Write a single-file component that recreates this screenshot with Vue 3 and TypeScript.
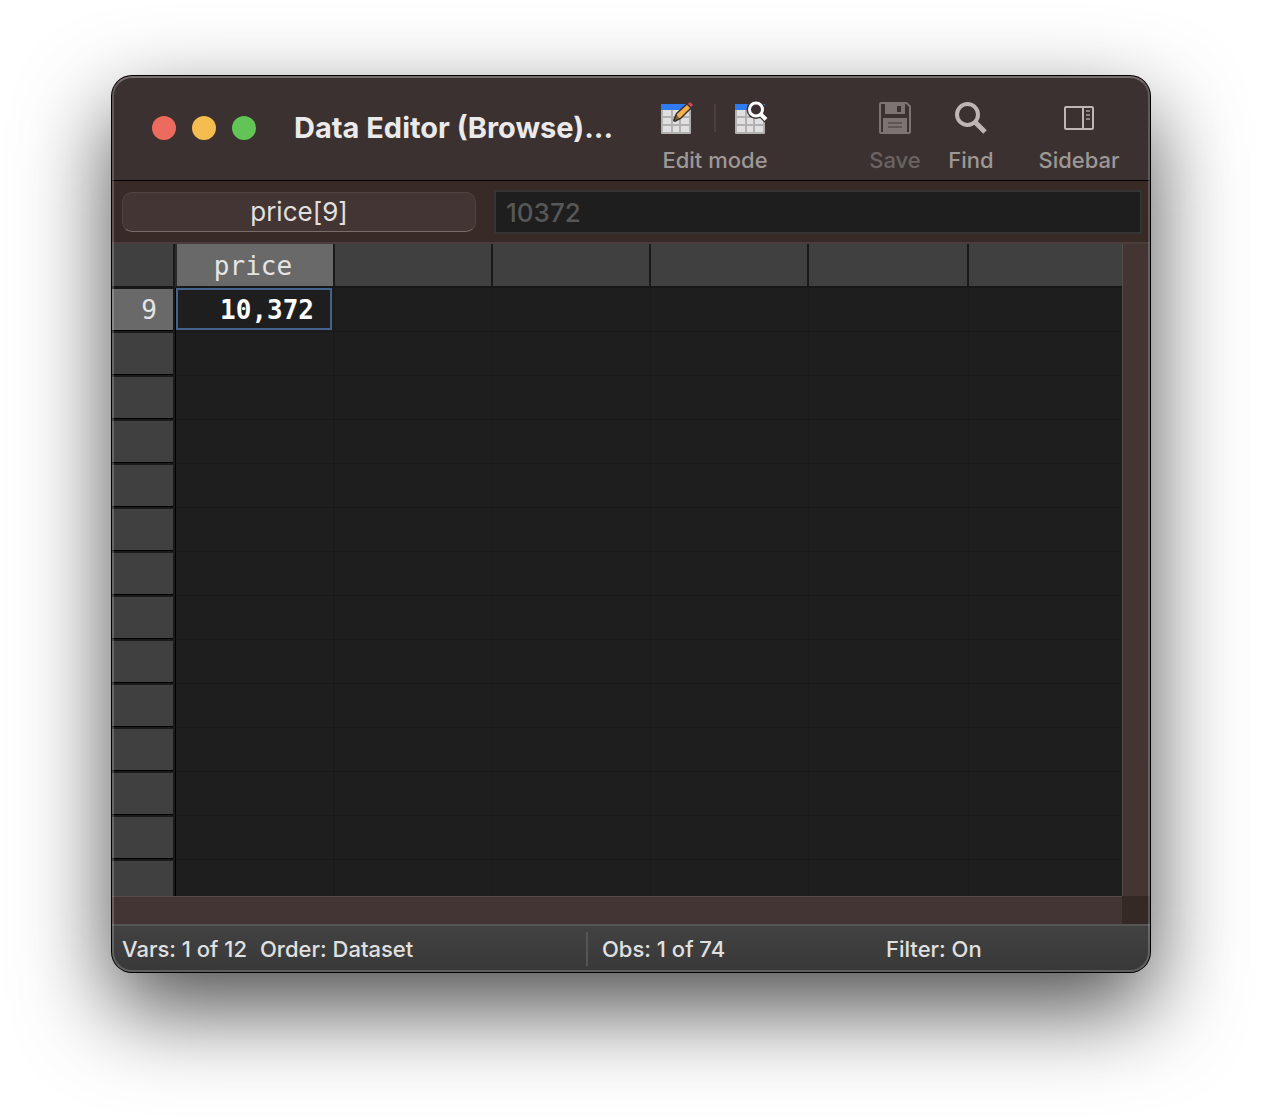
<script setup lang="ts">
import { ref } from 'vue'

interface Column {
  name: string
  width: string
}

interface Row {
  label: string
  value: string
}

const columns: Column[] = [
  { name: 'price', width: '160px' },
  { name: '', width: '158px' },
  { name: '', width: '158px' },
  { name: '', width: '158px' },
  { name: '', width: '160px' },
  { name: '', width: 'auto' },
]

const rows: Row[] = Array.from({ length: 14 }, (_, i) => ({
  label: i === 0 ? '9' : '',
  value: i === 0 ? '10,372' : '',
}))

const cellValue = ref('10372')
</script>

<template>
  <main class="desktop">
    <section class="window">
      <header class="titlebar">
        <div class="lights">
          <button class="light close" aria-label="Close"></button>
          <button class="light minimize" aria-label="Minimize"></button>
          <button class="light zoom" aria-label="Zoom"></button>
        </div>
        <h1 class="title">Data Editor (Browse)...</h1>

        <div class="tools">
          <div class="mode" role="group" aria-labelledby="mode-label">
            <div class="mode-buttons">
              <button class="icon-button" aria-label="Edit">
                <svg width="34" height="34" viewBox="0 0 34 34">
                  <rect x="0" y="2" width="30" height="30" rx="1" fill="#b3b1b0" />
                  <path d="M0 8 V3 Q0 2 1 2 H29 Q30 2 30 3 V8 Z" fill="#2f7cf0" />
                  <g fill="#e0e0e2">
                    <rect x="2" y="8" width="8" height="6" /><rect x="12" y="8" width="6" height="6" /><rect x="20" y="8" width="8" height="6" />
                    <rect x="2" y="16" width="8" height="6" /><rect x="12" y="16" width="6" height="6" /><rect x="20" y="16" width="8" height="6" />
                    <rect x="2" y="24" width="8" height="6" /><rect x="12" y="24" width="6" height="6" /><rect x="20" y="24" width="8" height="6" />
                  </g>
                  <path d="M12 18 L15 11 L26 1 Q29 -2 32 1 Q34 4 31 6 L20 17 L14 20 Q12 20 12 18 Z" fill="#3b3130" />
                  <path d="M14 18 L16 13 L19 16 Z" fill="#8a6534" />
                  <path d="M16 12 L26 3 L29 6 L19 16 Q16 15 16 12 Z" fill="#f3b14b" />
                  <path d="M27 2 L29 0 L32 3 L30 5 Z" fill="#e04556" />
                </svg>
              </button>
              <span class="mode-divider"></span>
              <button class="icon-button" aria-label="Browse">
                <svg width="34" height="34" viewBox="0 0 34 34">
                  <rect x="0" y="2" width="30" height="30" rx="1" fill="#b3b1b0" />
                  <path d="M0 8 V3 Q0 2 1 2 H29 Q30 2 30 3 V8 Z" fill="#2f7cf0" />
                  <g fill="#e0e0e2">
                    <rect x="2" y="8" width="8" height="6" /><rect x="12" y="8" width="6" height="6" /><rect x="20" y="8" width="8" height="6" />
                    <rect x="2" y="16" width="8" height="6" /><rect x="12" y="16" width="6" height="6" /><rect x="20" y="16" width="8" height="6" />
                    <rect x="2" y="24" width="8" height="6" /><rect x="12" y="24" width="6" height="6" /><rect x="20" y="24" width="8" height="6" />
                  </g>
                  <circle cx="21" cy="7.500" r="9.500" fill="#3b3130" />
                  <path d="M25 11 L32 18" stroke="#3b3130" stroke-width="7" />
                  <circle cx="21" cy="7.500" r="6.500" fill="#3b3130" stroke="#fff" stroke-width="3" />
                  <path d="M25 11.500 L31 17.500" stroke="#fff" stroke-width="4" />
                </svg>
              </button>
            </div>
            <span id="mode-label" class="caption">Edit mode</span>
          </div>

          <button class="tool save" disabled>
            <svg width="32" height="32" viewBox="0 0 32 32">
              <path fill-rule="evenodd" fill="#7c7472" d="M2 0 H28 L32 4 V30 Q32 32 30 32 H2 Q0 32 0 30 V2 Q0 0 2 0 Z M2 2 V30 H4 V16 H28 V30 H30 V5 L27 2 H26 V12 H6 V2 Z M18 4 V10 H22 V4 Z" />
              <path d="M9 21 H23 M9 25 H23" stroke="#5f5654" stroke-width="2" />
            </svg>
            <span class="caption">Save</span>
          </button>

          <button class="tool find">
            <svg width="32" height="32" viewBox="0 0 32 32" fill="none" stroke="#bfb5b3">
              <circle cx="12.500" cy="12.500" r="10.500" stroke-width="4" />
              <path d="M20 20 L30 30" stroke-width="5" />
            </svg>
            <span class="caption">Find</span>
          </button>

          <button class="tool sidebar">
            <svg width="30" height="32" viewBox="0 0 30 32" fill="none" stroke="#bfb5b3">
              <rect x="1" y="5" width="28" height="22" rx="1" stroke-width="2" />
              <path d="M19 5 V27" stroke-width="2" />
              <path d="M22 9 H26 M22 13 H26 M22 17 H26" stroke="#8c8381" stroke-width="2" />
            </svg>
            <span class="caption">Sidebar</span>
          </button>
        </div>
      </header>

      <div class="entry">
        <button class="reference">price[9]</button>
        <input v-model="cellValue" class="value" type="text" aria-label="Cell value" disabled />
      </div>

      <div class="grid-area">
        <table class="grid">
          <colgroup>
            <col class="row-col" />
            <col v-for="(column, i) in columns" :key="i" :style="{ width: column.width }" />
          </colgroup>
          <thead>
            <tr>
              <th class="corner"></th>
              <th v-for="(column, i) in columns" :key="i" scope="col" :class="{ active: column.name }">
                {{ column.name }}
              </th>
            </tr>
          </thead>
          <tbody>
            <tr v-for="(row, r) in rows" :key="r" :class="{ current: row.label }">
              <th scope="row"><div class="row-label">{{ row.label }}</div></th>
              <td v-for="(column, c) in columns" :key="c">
                <div v-if="c === 0 && row.value" class="selected">{{ row.value }}</div>
              </td>
            </tr>
          </tbody>
        </table>
        <div class="scroll-y"></div>
        <div class="scroll-x"></div>
        <div class="scroll-corner"></div>
      </div>

      <footer class="status">
        <div class="status-vars"><span>Vars: 1 of 12</span><span>Order: Dataset</span></div>
        <div class="status-obs">Obs: 1 of 74</div>
        <div class="status-filter">Filter: On</div>
      </footer>
    </section>
  </main>
</template>

<style>
body {
  margin: 0;
  background: #fff;
}
</style>

<style scoped>
* {
  box-sizing: border-box;
}

button {
  margin: 0;
  padding: 0;
  border: 0;
  background: none;
  font: inherit;
  color: inherit;
}

svg {
  display: block;
  flex: none;
  overflow: visible;
}

.desktop {
  min-height: 100vh;
  padding: 76px 112px 148px;
  overflow: hidden;
  font-family: Inter, "Liberation Sans", sans-serif;
}

.window {
  position: relative;
  overflow: hidden;
  border-radius: 20px;
  background: #372a27;
  box-shadow: 0 0 0 1px #000, 0 36px 90px rgba(0, 0, 0, 0.7);
}

.window::after {
  content: "";
  position: absolute;
  inset: 0;
  border: 2px solid rgba(255, 255, 255, 0.2);
  border-top-color: rgba(255, 255, 255, 0.3);
  border-radius: 20px;
  pointer-events: none;
}

.titlebar {
  display: flex;
  align-items: center;
  height: 105px;
  padding: 0 31px 0 40px;
  border-bottom: 1px solid #000;
  background: #3b3130;
}

.lights {
  display: flex;
  flex: none;
  gap: 16px;
}

.light {
  width: 24px;
  height: 24px;
  border-radius: 50%;
}

.close {
  background: #ed6a5e;
}

.minimize {
  background: #f5bd4f;
}

.zoom {
  background: #61c454;
}

.title {
  margin: 0 0 0 38px;
  color: #ebe9e9;
  font-size: 29px;
  font-weight: 700;
  line-height: 36px;
  white-space: nowrap;
}

.tools {
  display: flex;
  align-items: flex-start;
  margin-left: auto;
  padding-top: 20px;
}

.mode,
.tool {
  display: flex;
  flex-direction: column;
  align-items: center;
  gap: 12px;
}

.mode {
  width: 108px;
  margin-right: 100px;
}

.mode-buttons {
  display: flex;
  align-items: center;
  gap: 19px;
  height: 32px;
}

.icon-button {
  width: 34px;
  height: 32px;
}

.mode-divider {
  width: 2px;
  height: 28px;
  background: #4a403f;
}

.caption {
  color: #9d9796;
  font-size: 22px;
  font-weight: 500;
  line-height: 28px;
  white-space: nowrap;
}

.save {
  width: 52px;
  margin-right: 27px;
}

.save .caption {
  color: #6b6361;
}

.find {
  width: 46px;
  margin-right: 45px;
}

.sidebar {
  width: 80px;
}

.entry {
  display: flex;
  align-items: center;
  gap: 18px;
  height: 63px;
  padding: 0 8px 0 10px;
  border-bottom: 2px solid #4a3d3b;
}

.reference {
  flex: none;
  width: 354px;
  height: 40px;
  border: 1px solid #51433f;
  border-bottom-color: #796c69;
  border-radius: 10px;
  background: #423533;
  color: #e3e0df;
  font-size: 26px;
  line-height: 38px;
}

.value {
  flex: 1;
  min-width: 0;
  height: 44px;
  padding: 2px 10px 0;
  border: 2px solid #343434;
  border-radius: 0;
  background: #1e1e1e;
  color: #575757;
  font-family: inherit;
  font-size: 26px;
  font-weight: 500;
}

.grid-area {
  display: grid;
  grid-template-columns: minmax(0, 1fr) 28px;
  grid-template-rows: auto 28px;
}

.grid {
  width: 100%;
  table-layout: fixed;
  border-collapse: separate;
  border-spacing: 0;
  background: #1e1e1e;
  color: #e5e5e5;
  font-family: "DejaVu Sans Mono", "Liberation Mono", monospace;
  font-size: 26px;
  line-height: 40px;
}

.row-col {
  width: 63px;
}

.grid th,
.grid td {
  padding: 0;
  font-weight: 400;
}

.grid thead th {
  height: 44px;
  padding: 2px 4px 0 0;
  border-right: 2px solid #1a1a1a;
  border-bottom: 2px solid #171717;
  background: #404040;
}

.grid thead th:last-child {
  border-right: 0;
}

.grid thead .active {
  border-left: 2px solid #2b2b2b;
  background: #696969;
}

.grid tbody th {
  height: 44px;
  border-top: 1px solid #1a1a1a;
  border-right: 2px solid #1a1a1a;
  border-bottom: 1px solid #1a1a1a;
}

.row-label {
  height: 42px;
  padding: 1px 16px 0 0;
  border-bottom: 1px solid #000;
  background: #404040;
  text-align: right;
}

.current .row-label {
  background: #696969;
}

.grid td {
  padding-bottom: 1px;
  border-right: 1px solid #1b1b1b;
  border-bottom: 1px solid #1a1a1a;
  vertical-align: top;
}

.grid td:nth-child(2) {
  padding-right: 1px;
  border-right-width: 2px;
  border-left: 1px solid #000;
}

.grid td:last-child {
  border-right: 0;
}

.selected {
  height: 42px;
  padding-right: 16px;
  border: 2px solid #45628c;
  color: #fff;
  font-weight: 700;
  text-align: right;
}

.grid tbody tr:last-child th,
.grid tbody tr:last-child td {
  height: 36px;
  border-bottom: 0;
}

.grid tbody tr:last-child .row-label {
  height: 35px;
  border-bottom: 0;
}

.scroll-y {
  border-left: 1px solid #574a47;
  background: #423533;
}

.scroll-x {
  border-top: 1px solid #574a47;
  background: #423533;
}

.scroll-corner {
  background: #352925;
}

.status {
  display: grid;
  grid-template-columns: 464fr 300fr 254fr;
  align-items: center;
  height: 48px;
  padding: 0 10px;
  border-top: 2px solid #555;
  background: linear-gradient(#424242, #383838);
  color: #e0e0e0;
  font-size: 22px;
  font-weight: 500;
  line-height: 34px;
  white-space: nowrap;
}

.status-vars {
  display: flex;
  gap: 13px;
}

.status-obs {
  padding-left: 14px;
  border-left: 2px solid #555;
}
</style>
